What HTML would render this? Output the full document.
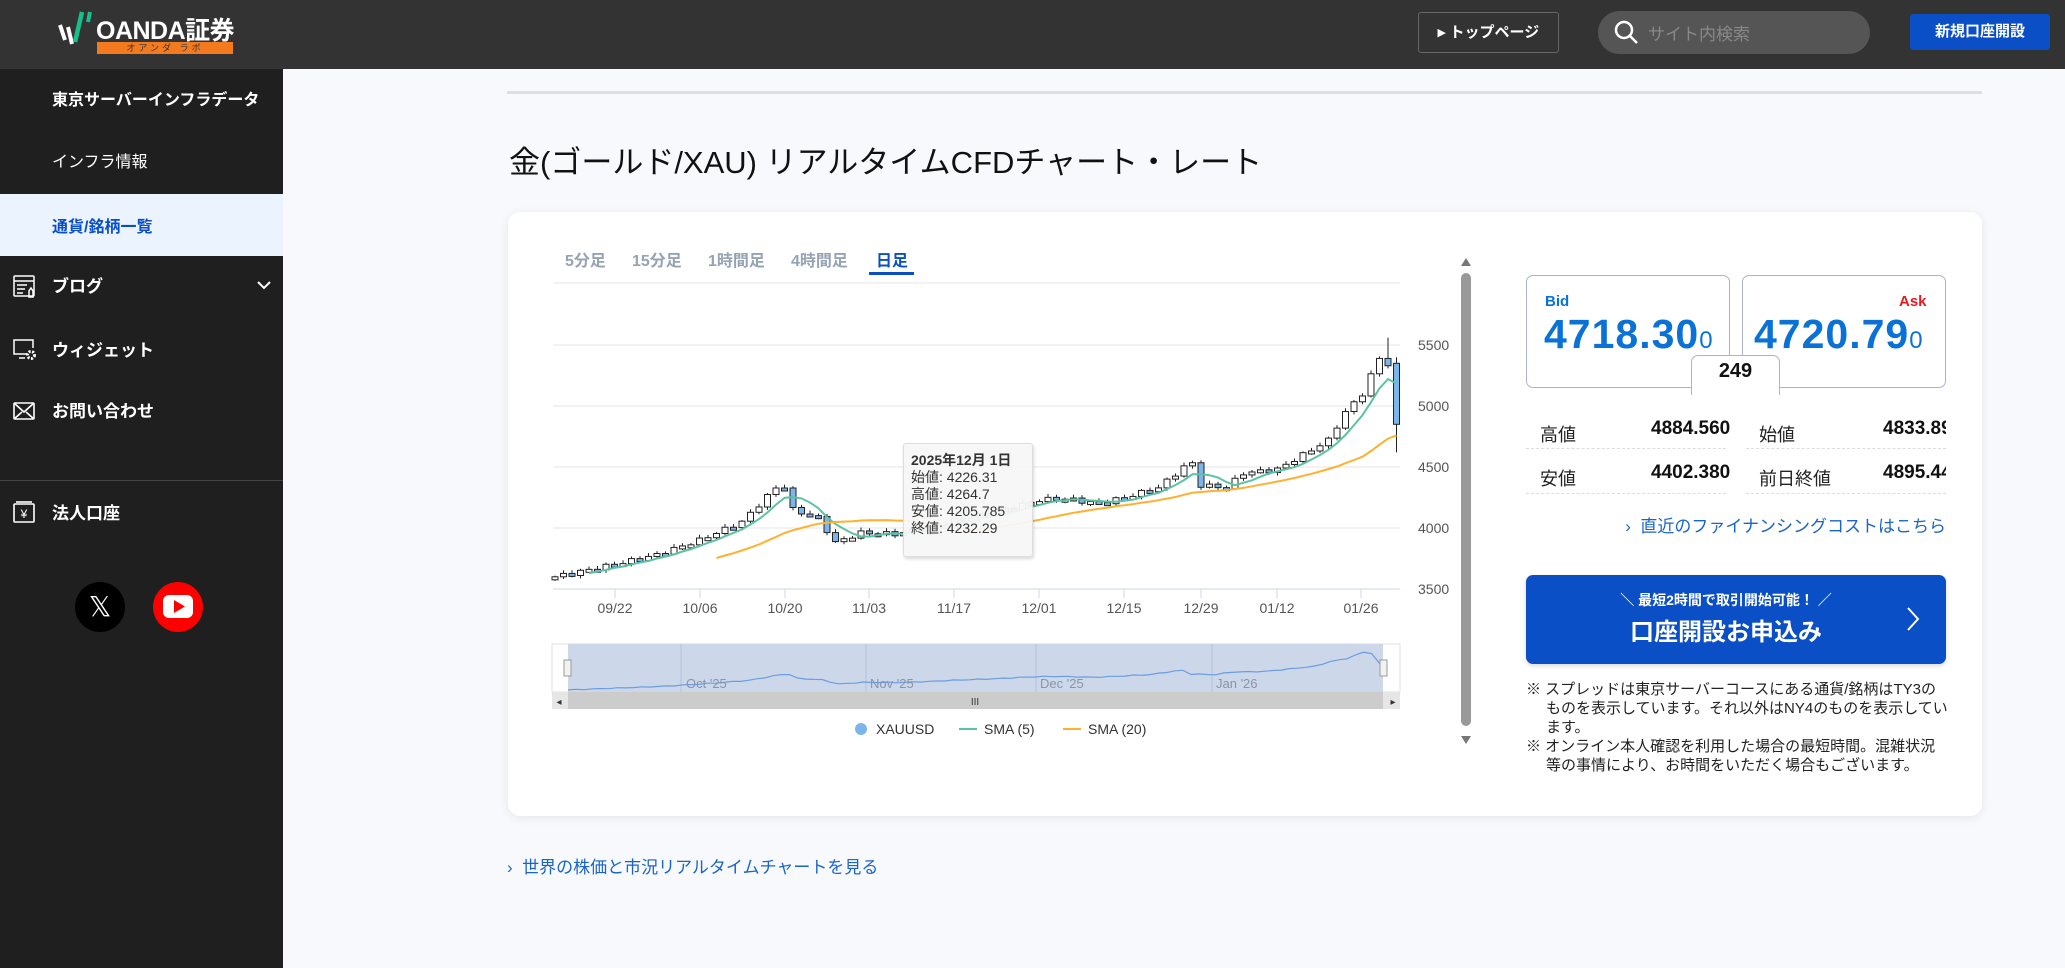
<!DOCTYPE html>
<html><head><meta charset="utf-8">
<style>
*{box-sizing:border-box;margin:0;padding:0}
body{width:2065px;height:968px;overflow:hidden;background:#f7f9fc;font-family:"Liberation Sans","Noto Sans CJK JP",sans-serif;position:relative}
.abs{position:absolute}
#nav{left:0;top:0;width:2065px;height:69px;background:#333}
#side{left:0;top:69px;width:283px;height:899px;background:#1f1f1f}
.si{position:absolute;left:52px;color:#fff;font-size:17px;font-weight:bold;white-space:nowrap}
.ic{position:absolute;left:13px}
.card{background:#fff;border-radius:12px;box-shadow:0 2px 10px rgba(0,0,0,.08)}
.tab{position:absolute;top:247px;font-size:16px;font-weight:bold;color:#96a3b5}
.box{position:absolute;border:1.5px solid #aab5cc;border-radius:7px;background:#fff}
.num{font-weight:bold;color:#0a72d6;font-size:41px;letter-spacing:1px}
.lbl{position:absolute;font-size:18px;color:#222}
.val{position:absolute;font-size:19px;font-weight:bold;color:#111}
.dl{position:absolute;height:0;border-top:1.5px dashed #ddd}
.note{position:absolute;left:1526px;font-size:15px;color:#222;line-height:19px;width:422px}
</style></head><body>
<div id="nav" class="abs">
  <svg class="abs" style="left:58px;top:10px" width="36" height="36" viewBox="0 0 36 36">
    <path d="M2 15 L7 30" stroke="#fff" stroke-width="4"/>
    <path d="M10 17 L14 34" stroke="#fff" stroke-width="4"/>
    <path d="M17 32 L24 2" stroke="#17c08a" stroke-width="4.5"/>
    <path d="M30 12 L32 2" stroke="#17c08a" stroke-width="4"/>
  </svg>
  <div class="abs" style="left:96px;top:11px;color:#fff;font-size:25px;font-weight:bold;letter-spacing:-.5px">OANDA証券</div>
  <div class="abs" style="left:97px;top:42px;width:136px;height:12px;background:#f47a20;color:#333;font-size:9px;text-align:center;line-height:12px;letter-spacing:3px">オアンダ ラボ</div>
  <div class="abs" style="left:1418px;top:12px;width:141px;height:41px;border:1px solid #666;border-radius:3px;color:#fff;font-size:15px;font-weight:bold;line-height:39px;text-align:center">▸ トップページ</div>
  <div class="abs" style="left:1598px;top:11px;width:272px;height:43px;background:#555;border-radius:22px"></div>
  <svg class="abs" style="left:1614px;top:20px" width="26" height="26" viewBox="0 0 26 26"><circle cx="10" cy="10" r="8" fill="none" stroke="#fff" stroke-width="2.5"/><path d="M16 16 L23 23" stroke="#fff" stroke-width="2.5"/></svg>
  <div class="abs" style="left:1648px;top:20px;color:#888;font-size:17px">サイト内検索</div>
  <div class="abs" style="left:1910px;top:14px;width:140px;height:36px;background:#0b4fc7;border-radius:3px;color:#fff;font-size:15px;font-weight:bold;line-height:36px;text-align:center">新規口座開設</div>
</div>
<div id="side" class="abs">
  <div class="si" style="top:17px;font-size:16px">東京サーバーインフラデータ</div>
  <div class="si" style="top:79px;font-weight:normal;font-size:16px">インフラ情報</div>
  <div class="abs" style="left:0;top:125px;width:283px;height:62px;background:#ebf3ff"></div>
  <div class="si" style="top:144px;color:#0b4fc7;font-size:16px">通貨/銘柄一覧</div>
  <svg class="ic" style="top:206px" width="24" height="24" viewBox="0 0 24 24" fill="none" stroke="#fff" stroke-width="1.5"><rect x="1" y="1" width="20" height="20" rx="1"/><path d="M1 6h20M4 10h10M4 14h8M4 18h6"/><path d="M16 22v-6l2-3 2 3v6z"/></svg>
  <div class="si" style="top:203px">ブログ</div>
  <svg class="abs" style="left:257px;top:211px" width="14" height="10"><path d="M1 2l6 6 6-6" fill="none" stroke="#fff" stroke-width="2"/></svg>
  <svg class="ic" style="top:270px" width="24" height="22" viewBox="0 0 24 22" fill="none" stroke="#fff" stroke-width="1.5"><path d="M14 15H1V1h19v8"/><path d="M6 19h6"/><circle cx="18" cy="16" r="3.5" stroke-width="3" stroke-dasharray="2 1.5"/></svg>
  <div class="si" style="top:267px">ウィジェット</div>
  <svg class="ic" style="top:333px" width="22" height="18" viewBox="0 0 22 18" fill="none" stroke="#fff" stroke-width="1.6"><rect x="1" y="1" width="20" height="16" rx="1"/><path d="M1 1l10 9 10-9M1 17l8-7M21 17l-8-7"/></svg>
  <div class="si" style="top:328px">お問い合わせ</div>
  <div class="abs" style="left:0;top:411px;width:283px;height:1px;background:#444"></div>
  <svg class="ic" style="top:432px" width="22" height="22" viewBox="0 0 22 22" fill="none" stroke="#fff" stroke-width="1.6"><rect x="1" y="3" width="20" height="18" rx="1"/><path d="M3 1h16"/><text x="11" y="17" font-size="12" fill="#fff" stroke="none" text-anchor="middle" font-family="Liberation Sans">¥</text></svg>
  <div class="si" style="top:430px">法人口座</div>
  <div class="abs" style="left:75px;top:513px;width:50px;height:50px;border-radius:50%;background:#000;color:#fff;font-size:28px;text-align:center;line-height:50px;font-family:'DejaVu Sans',sans-serif">𝕏</div>
  <div class="abs" style="left:153px;top:513px;width:50px;height:50px;border-radius:50%;background:#f00"></div>
  <div class="abs" style="left:163px;top:526px;width:30px;height:23px;border-radius:6px;background:#fff"></div>
  <svg class="abs" style="left:173px;top:531px" width="12" height="13"><path d="M1 0v13l11-6.5z" fill="#f00"/></svg>
</div>

<div class="abs" style="left:507px;top:91px;width:1475px;height:3px;background:#dcdfe3"></div>
<div class="abs" style="left:509px;top:137px;font-size:31px;color:#111">金(ゴールド/XAU) リアルタイムCFDチャート・レート</div>
<div class="abs card" style="left:508px;top:212px;width:1474px;height:604px"></div>

<div class="tab" style="left:565px">5分足</div>
<div class="tab" style="left:632px">15分足</div>
<div class="tab" style="left:708px">1時間足</div>
<div class="tab" style="left:791px">4時間足</div>
<div class="tab" style="left:876px;color:#0b4fc7">日足</div>
<div class="abs" style="left:869px;top:272px;width:45px;height:3px;background:#0b4fc7"></div>

<svg id="ch" class="abs" style="left:0;top:0" width="2065" height="968"></svg>

<div class="abs" style="left:903px;top:443px;width:130px;height:114px;background:rgba(247,247,247,.95);border:1px solid #ddd;box-shadow:1px 2px 3px rgba(0,0,0,.15);border-radius:3px;font-size:14px;color:#333;padding:8px 0 0 7px;line-height:17px">
<b>2025年12月 1日</b><br>始値: 4226.31<br>高値: 4264.7<br>安値: 4205.785<br>終値: 4232.29</div>

<div class="box" style="left:1526px;top:275px;width:204px;height:113px"></div>
<div class="box" style="left:1742px;top:275px;width:204px;height:113px"></div>
<div class="abs" style="left:1691px;top:355px;width:89px;height:40px;background:#fff;border:1.5px solid #aab5cc;border-bottom:none;border-radius:7px 7px 0 0"></div>
<div class="abs" style="left:1545px;top:293px;color:#0a72d6;font-size:15px;font-weight:bold">Bid</div>
<div class="abs" style="left:1899px;top:293px;color:#e8191e;font-size:15px;font-weight:bold">Ask</div>
<div class="abs num" style="left:1544px;top:311px">4718.30<span style="font-size:24px;font-weight:normal">0</span></div>
<div class="abs num" style="left:1754px;top:311px">4720.79<span style="font-size:24px;font-weight:normal">0</span></div>
<div class="abs" style="left:1691px;top:360px;width:89px;text-align:center;font-size:20px;font-weight:bold;color:#111">249</div>

<div class="lbl" style="left:1540px;top:421px">高値</div>
<div class="val" style="left:1651px;top:418px">4884.560</div>
<div class="lbl" style="left:1759px;top:421px">始値</div>
<div class="abs" style="left:1759px;top:410px;width:187px;height:40px;overflow:hidden"><div class="val" style="left:124px;top:8px">4833.890</div></div>
<div class="dl" style="left:1526px;top:448px;width:200px"></div>
<div class="dl" style="left:1746px;top:448px;width:200px"></div>
<div class="lbl" style="left:1540px;top:465px">安値</div>
<div class="val" style="left:1651px;top:462px">4402.380</div>
<div class="lbl" style="left:1759px;top:465px">前日終値</div>
<div class="abs" style="left:1759px;top:454px;width:187px;height:40px;overflow:hidden"><div class="val" style="left:124px;top:8px">4895.440</div></div>
<div class="dl" style="left:1526px;top:493px;width:200px"></div>
<div class="dl" style="left:1746px;top:493px;width:200px"></div>
<div class="abs" style="left:1610px;top:512px;width:336px;text-align:right;color:#1a64c8;font-size:17px">›&nbsp; 直近のファイナンシングコストはこちら</div>

<div class="abs" style="left:1526px;top:575px;width:420px;height:89px;background:#0b4fc7;border-radius:7px;box-shadow:0 2px 4px rgba(0,0,0,.15)"></div>
<div class="abs" style="left:1526px;top:590px;width:420px;text-align:center;color:#fff;font-size:14px;font-weight:bold;margin-left:-10px">＼ 最短2時間で取引開始可能！ ／</div>
<div class="abs" style="left:1526px;top:612px;width:420px;text-align:center;color:#fff;font-size:24px;font-weight:bold;margin-left:-10px">口座開設お申込み</div>
<svg class="abs" style="left:1906px;top:606px" width="14" height="26"><path d="M2 2l10 11-10 11" fill="none" stroke="#fff" stroke-width="2"/></svg>

<div class="note" style="top:680px;padding-left:20px;text-indent:-20px">※ スプレッドは東京サーバーコースにある通貨/銘柄はTY3のものを表示しています。それ以外はNY4のものを表示しています。</div>
<div class="note" style="top:737px;padding-left:20px;text-indent:-20px;width:415px">※ オンライン本人確認を利用した場合の最短時間。混雑状況等の事情により、お時間をいただく場合もございます。</div>

<div class="abs" style="left:507px;top:853px;color:#1a64c8;font-size:17px">›&nbsp; 世界の株価と市況リアルタイムチャートを見る</div>

<script>
var s='';
function Y(p){return 345+(5500-p)*0.122;}
[5500,5000,4500,4000].forEach(function(p){s+='<line x1="553" x2="1400" y1="'+Y(p)+'" y2="'+Y(p)+'" stroke="#e6e6e6"/>';});
s+='<line x1="553" x2="1400" y1="283" y2="283" stroke="#e6e6e6"/>';
s+='<line x1="553" x2="1400" y1="589" y2="589" stroke="#ccd6eb"/>';
[5500,5000,4500,4000,3500].forEach(function(p){s+='<text x="1418" y="'+(Y(p)+5)+'" font-size="14" fill="#555" font-family="Liberation Sans">'+p+'</text>';});
var xl=[['09/22',615],['10/06',700],['10/20',785],['11/03',869],['11/17',954],['12/01',1039],['12/15',1124],['12/29',1201],['01/12',1277],['01/26',1361]];
xl.forEach(function(a){s+='<line x1="'+a[1]+'" x2="'+a[1]+'" y1="589" y2="598" stroke="#ccd6eb"/><text x="'+a[1]+'" y="613" font-size="14" fill="#555" text-anchor="middle" font-family="Liberation Sans">'+a[0]+'</text>';});
var K=[[0,3600],[7,3700],[12,3780],[17,3900],[22,4050],[26,4330],[27,4340],[28,4150],[31,4080],[33,3880],[36,3960],[40,3950],[44,4000],[47,4060],[52,4130],[57,4230],[60,4240],[64,4200],[67,4250],[71,4330],[74,4500],[75,4530],[76,4350],[79,4330],[81,4450],[85,4480],[88,4600],[91,4720],[93,4950],[95,5100],[97,5400],[98,5300],[99,4850]];
var C=[];
for(var i=0;i<100;i++){for(var k=0;k<K.length-1;k++){if(i>=K[k][0]&&i<=K[k+1][0]){var t=(i-K[k][0])/(K[k+1][0]-K[k][0]);C[i]=K[k][1]+t*(K[k+1][1]-K[k][1])+Math.sin(i*2.3)*18;break;}}}
C[99]=4850;C[97]=5390;C[98]=5330;
function X(i){return 555+i*8.5;}
for(var i=0;i<100;i++){var o=i?C[i-1]:3590,c=C[i],hi=Math.max(o,c)+10+Math.abs(Math.sin(i))*18,lo=Math.min(o,c)-10-Math.abs(Math.cos(i))*14;
if(i==98){hi=5560;} if(i==99){hi=5400;lo=4620;o=5350;}
var up=c>=o,x=X(i);
s+='<line x1="'+x+'" x2="'+x+'" y1="'+Y(hi)+'" y2="'+Y(lo)+'" stroke="#222"/>';
var h=Math.max(3,Math.abs(Y(o)-Y(c)));
s+='<rect x="'+(x-3)+'" y="'+Math.min(Y(o),Y(c))+'" width="6" height="'+h+'" fill="'+(up?'#fff':'#7cb5ec')+'" stroke="#222" stroke-width="1"/>';}
function sma(n,col){var p='';for(var i=n-1;i<100;i++){var a=0;for(var j=0;j<n;j++)a+=C[i-j];a/=n;p+=(p?' L':'M')+X(i)+' '+Y(a).toFixed(1);}s+='<path d="'+p+'" fill="none" stroke="'+col+'" stroke-width="2"/>';}
sma(5,'#5bc2a3');sma(20,'#ffb02e');
s+='<rect x="552" y="644" width="848" height="48" fill="#fff" stroke="#e0e0e0"/>';
s+='<rect x="568" y="644" width="815" height="48" fill="#cdd7ea"/>';
[681,866,1036,1212].forEach(function(x){s+='<line x1="'+x+'" x2="'+x+'" y1="644" y2="692" stroke="#b8c2d6"/>';});
var np='';for(var i=0;i<100;i++){np+=(np?' L':'M')+(568+i*8.2).toFixed(1)+' '+(692-(C[i]-3500)*0.021).toFixed(1);}
s+='<path d="'+np+'" fill="none" stroke="#6b9de0" stroke-width="1.2"/>';
[['Oct \'25',686],['Nov \'25',870],['Dec \'25',1040],['Jan \'26',1216]].forEach(function(a){s+='<text x="'+a[1]+'" y="688" font-size="13" fill="#8a94a6" font-family="Liberation Sans">'+a[0]+'</text>';});
s+='<rect x="564" y="660" width="7" height="16" fill="#f2f2f2" stroke="#999"/><rect x="1380" y="660" width="7" height="16" fill="#f2f2f2" stroke="#999"/>';
s+='<rect x="552" y="692" width="848" height="17" fill="#e6e6e6"/><rect x="568" y="692" width="815" height="17" fill="#ccc"/>';
s+='<text x="975" y="705" font-size="10" fill="#333" text-anchor="middle">III</text><text x="559" y="705" font-size="10" fill="#333" text-anchor="middle">◂</text><text x="1393" y="705" font-size="10" fill="#333" text-anchor="middle">▸</text>';
s+='<circle cx="861" cy="729" r="6" fill="#7cb5ec"/><text x="876" y="734" font-size="14" fill="#333" font-family="Liberation Sans">XAUUSD</text>';
s+='<line x1="959" x2="977" y1="729" y2="729" stroke="#5bc2a3" stroke-width="2"/><text x="984" y="734" font-size="14" fill="#333" font-family="Liberation Sans">SMA (5)</text>';
s+='<line x1="1063" x2="1081" y1="729" y2="729" stroke="#ffb02e" stroke-width="2"/><text x="1088" y="734" font-size="14" fill="#333" font-family="Liberation Sans">SMA (20)</text>';
s+='<path d="M1461 266 L1466 258 L1471 266Z" fill="#777"/><rect x="1461" y="273" width="10" height="453" rx="5" fill="#999"/><path d="M1461 736 L1466 744 L1471 736Z" fill="#777"/>';
document.getElementById('ch').innerHTML=s;
</script>
</body></html>
